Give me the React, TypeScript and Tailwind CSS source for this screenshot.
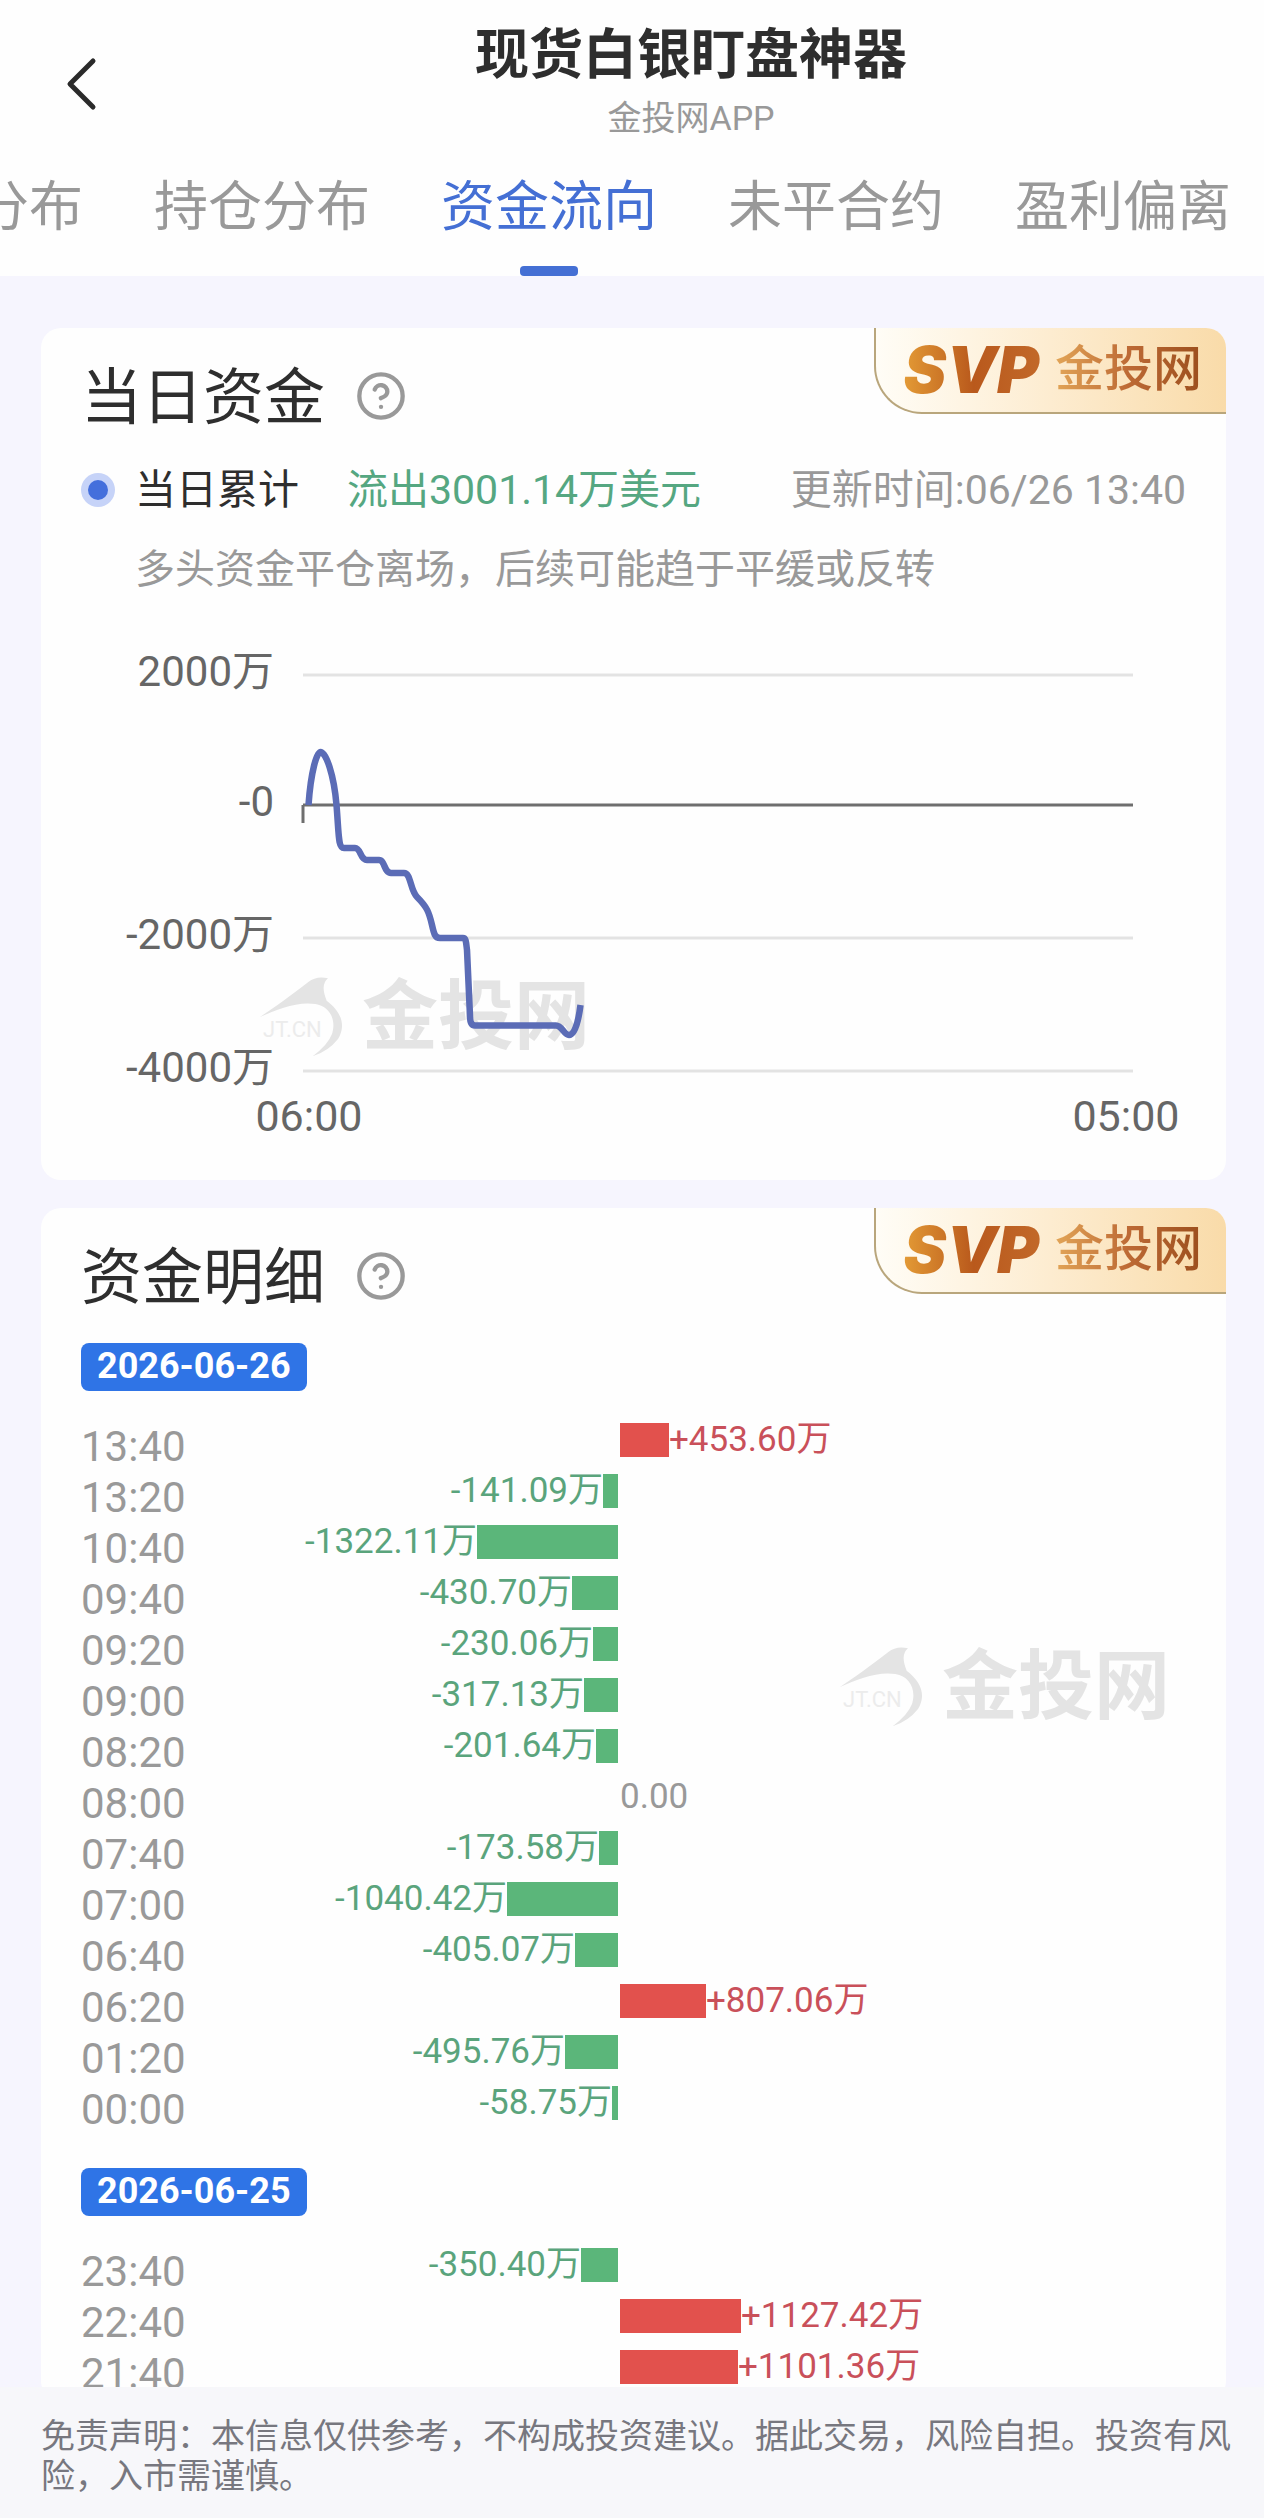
import React from 'react';
import { CircleHelp } from 'lucide-react';

interface FlowItem {
  time: string;
  value: number;
}

interface FlowDay {
  date: string;
  items: FlowItem[];
}

const TABS = ['分布', '持仓分布', '资金流向', '未平合约', '盈利偏离'];
const ACTIVE_TAB = '资金流向';

// px per 万
const BAR_SCALE = 0.107;

const DAYS: FlowDay[] = [
  {
    date: '2026-06-26',
    items: [
      { time: '13:40', value: 453.6 },
      { time: '13:20', value: -141.09 },
      { time: '10:40', value: -1322.11 },
      { time: '09:40', value: -430.7 },
      { time: '09:20', value: -230.06 },
      { time: '09:00', value: -317.13 },
      { time: '08:20', value: -201.64 },
      { time: '08:00', value: 0 },
      { time: '07:40', value: -173.58 },
      { time: '07:00', value: -1040.42 },
      { time: '06:40', value: -405.07 },
      { time: '06:20', value: 807.06 },
      { time: '01:20', value: -495.76 },
      { time: '00:00', value: -58.75 },
    ],
  },
  {
    date: '2026-06-25',
    items: [
      { time: '23:40', value: -350.4 },
      { time: '22:40', value: 1127.42 },
      { time: '21:40', value: 1101.36 },
    ],
  },
];

const Y_TICKS = [
  { label: '2000万', y: 55 },
  { label: '-0', y: 185 },
  { label: '-2000万', y: 318 },
  { label: '-4000万', y: 451 },
];

const BrandTag: React.FC = () => (
  <div className="absolute top-0 right-0 flex h-[86px] items-center gap-3 rounded-bl-[48px] border-b-2 border-l-2 border-[#b9a67c] bg-linear-to-r from-[#fffdf6] via-[#fdecd0] to-[#f9dba9] pr-6 pl-7">
    <span className="bg-linear-to-r from-[#e39a35] via-[#b9591c] to-[#c2692a] bg-clip-text pr-1 font-[Inter] text-[64px] leading-[80px] font-black text-transparent italic">
      SVP
    </span>
    <span className="bg-linear-to-r from-[#e2a557] via-[#bd6a35] to-[#9c4f1d] bg-clip-text text-[49px] leading-[80px] font-medium text-transparent">
      金投网
    </span>
  </div>
);

const Watermark: React.FC<{ className: string }> = ({ className }) => (
  <div className={`pointer-events-none absolute flex items-center gap-4 text-[#e4e4e4] ${className}`} aria-hidden="true">
    <div className="relative">
      <svg width="87" height="85" viewBox="55 100 261 255" fill="currentColor">
        <path d="M58 229C105 198 150 165 203 124Q228 104 262 113Q238 132 258 180C300 212 318 252 292 295Q264 331 216 347Q262 312 274 280C288 236 266 196 224 190C168 182 112 206 58 229Z" />
      </svg>
      <span className="absolute top-11 left-1 text-[22px] leading-6 text-[#ececec]">JT.CN</span>
    </div>
    <span className="text-[76px] leading-[80px] font-bold">金投网</span>
  </div>
);

const CardTitle: React.FC<{ title: string }> = ({ title }) => (
  <div className="flex items-center gap-[30px]">
    <h2 className="pt-1 text-[61px] leading-[72px] text-[#2e2e2e]">{title}</h2>
    <button type="button" aria-label={`${title}说明`} className="text-[#999]">
      <CircleHelp size={52} />
    </button>
  </div>
);

const FlowChart: React.FC = () => (
  <svg className="relative mt-[22px] block h-auto w-full" viewBox="0 0 1185 560" fill="none" role="img" aria-label="当日资金">
    {Y_TICKS.map((tick) => (
      <g key={tick.label}>
        <line x1="262" x2="1092" y1={tick.y} y2={tick.y} stroke={tick.label === '-0' ? '#6e6e6e' : '#e3e3e3'} strokeWidth="3" />
        <text x="233" y={tick.y + 11} textAnchor="end" fontSize="42" fill="#666">
          {tick.label}
        </text>
      </g>
    ))}
    <path d="M262 185V203" stroke="#6e6e6e" strokeWidth="3" />
    <text x="268" y="511" textAnchor="middle" fontSize="43" fill="#666">
      06:00
    </text>
    <text x="1085" y="511" textAnchor="middle" fontSize="43" fill="#666">
      05:00
    </text>
    <path
      d="M267.5 185C270 150 276 132 279.5 132C285 132 293 155 295.5 185C298 215 297 228 303 228H314C320 228 319 240 326 240H338C344 240 343 253 350 253H363C370 253 369 270 376 277C386 287 388 292 391 305C393 314 394 318 399 318H422C425 318 425 322 426 330L429 396C429 402 430 405.5 434 405.5H515C521 405.5 523 415 528 415C533 415 537 405 539.5 385"
      stroke="#5b6cb6"
      strokeWidth="6.5"
      strokeLinejoin="round"
    />
  </svg>
);

const FlowRow: React.FC<{ item: FlowItem }> = ({ item }) => {
  const { time, value } = item;
  const width = Math.round(Math.abs(value) * BAR_SCALE);

  return (
    <li className="grid h-[51px] grid-cols-[117px_418px_1fr] items-start gap-x-0.5 text-[35px] leading-[34px]">
      <span className="text-[42px] leading-[48px] text-[#999]">{time}</span>
      <div className="flex justify-end text-[#5aa47c]">
        {value < 0 && (
          <>
            <span>{value.toFixed(2)}万</span>
            <div className="h-[34px] bg-[#5bb67a]" style={{ width }} />
          </>
        )}
      </div>
      <div className="flex text-[#c9505a]">
        {value > 0 && (
          <>
            <div className="h-[34px] bg-[#e2514d]" style={{ width }} />
            <span>+{value.toFixed(2)}万</span>
          </>
        )}
        {value === 0 && <span className="text-[#999]">0.00</span>}
      </div>
    </li>
  );
};

export default function App() {
  return (
    <div className="flex h-screen flex-col overflow-hidden bg-[#f6f5fe] font-[Roboto,'Noto_Sans_CJK_SC',sans-serif]">
      {/* Header */}
      <header className="shrink-0 bg-[#fefefe]">
        <div className="flex items-center pt-[26px] pb-1">
          <button type="button" aria-label="返回" className="flex w-[118px] shrink-0 pt-1 pl-16">
            <svg width="34" height="54" viewBox="0 0 34 54" fill="none" stroke="#2a2a2a" strokeWidth="5" strokeLinecap="round" strokeLinejoin="round">
              <path d="M29 4L6 27L29 50" />
            </svg>
          </button>
          <div className="flex-1 text-center">
            <h1 className="text-[54px] leading-[60px] font-bold text-[#2e2e2e]">现货白银盯盘神器</h1>
            <p className="mt-3 text-[34px] leading-10 text-[#999]">金投网APP</p>
          </div>
        </div>
        <nav className="flex justify-end gap-[71px] overflow-hidden pt-[30px] pr-[33px]">
          {TABS.map((tab) => (
            <button
              key={tab}
              type="button"
              className={`flex shrink-0 flex-col items-center text-[54px] leading-[72px] ${tab === ACTIVE_TAB ? 'text-[#446fd4]' : 'text-[#999]'}`}
            >
              {tab}
              <span className={`mt-[22px] h-2.5 w-[58px] rounded-[4px] ${tab === ACTIVE_TAB ? 'bg-[#446fd4]' : ''}`} />
            </button>
          ))}
        </nav>
      </header>

      <main className="flex min-h-0 flex-1 flex-col gap-7 overflow-hidden pt-[52px] pr-[38px] pl-[41px]">
        {/* Today */}
        <section className="relative shrink-0 overflow-hidden rounded-[20px] bg-[#fefefe] pt-[30px]">
          <BrandTag />
          <Watermark className="top-[646px] left-[218px]" />
          <div className="px-10">
            <CardTitle title="当日资金" />
            <div className="mt-7 flex items-center text-[41px] leading-[56px]">
              <span className="flex size-[34px] items-center justify-center rounded-full bg-[#c6d3f8]">
                <span className="size-5 rounded-full bg-[#446fdc]" />
              </span>
              <span className="ml-5 text-[#2e2e2e]">当日累计</span>
              <span className="ml-12 text-[#55a781]">流出3001.14万美元</span>
              <span className="ml-auto text-[#999]">更新时间:06/26 13:40</span>
            </div>
            <p className="mt-6 ml-[54px] text-[40px] leading-[56px] text-[#999]">多头资金平仓离场，后续可能趋于平缓或反转</p>
          </div>
          <FlowChart />
        </section>

        {/* Details */}
        <section className="relative shrink-0 overflow-hidden rounded-[20px] bg-[#fefefe] px-10 pt-[30px]">
          <BrandTag />
          <Watermark className="top-[436px] left-[798px]" />
          <CardTitle title="资金明细" />
          <div className="mt-[29px] space-y-[31px]">
            {DAYS.map((day) => (
              <div key={day.date}>
                <h3 className="w-fit rounded-lg bg-[#2f74e6] px-4 pb-0.5 text-[36px] leading-[46px] font-bold text-white">{day.date}</h3>
                <ul className="mt-8">
                  {day.items.map((item) => (
                    <FlowRow key={item.time} item={item} />
                  ))}
                </ul>
              </div>
            ))}
          </div>
        </section>
      </main>

      <footer className="shrink-0 bg-[#f7f7fa] pt-[29px] pr-8 pb-[22px] pl-[41px] text-[34px] leading-10 text-[#77777f]">
        免责声明：本信息仅供参考，不构成投资建议。据此交易，风险自担。投资有风险，入市需谨慎。
      </footer>
    </div>
  );
}
